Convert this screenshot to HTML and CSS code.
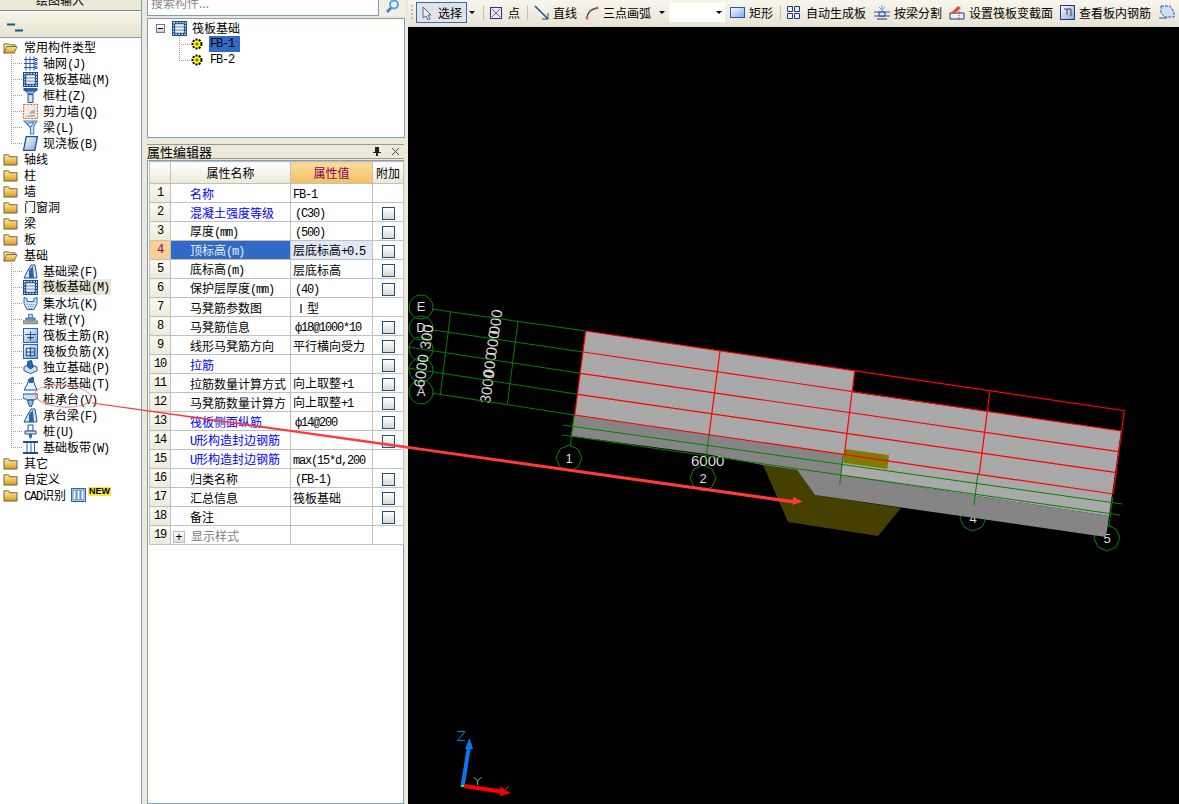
FILE: index.html
```html
<!DOCTYPE html>
<html lang="zh">
<head>
<meta charset="utf-8">
<title>筏板基础</title>
<link rel="stylesheet" href="styles.css">
</head>
<body>
<svg class="defs" width="0" height="0">
  <defs>
    <linearGradient id="gy" x1="0" y1="0" x2="0" y2="1"><stop offset="0" stop-color="#fdeca0"/><stop offset="1" stop-color="#dc9a20"/></linearGradient>
    <linearGradient id="gb" x1="0" y1="0" x2="1" y2="1"><stop offset="0" stop-color="#ffffff"/><stop offset="1" stop-color="#7fa8e0"/></linearGradient>
    <symbol id="fo" viewBox="0 0 16 14"><path d="M1 3h5l1 1h6v2H5L2 13H1z" fill="#f4dc90" stroke="#7a6a40"/><path d="M4 6h11l-3 7H1z" fill="url(#gy)" stroke="#7a6a40"/></symbol>
    <symbol id="fc" viewBox="0 0 16 14"><path d="M1 2h5l1 2h8v9H1z" fill="url(#gy)" stroke="#6a5a30"/></symbol>
    <symbol id="axis" viewBox="0 0 15 14"><path d="M1 3h11M1 7h11M1 11h11M3 0v14M7 0v14M11 0v14" stroke="#2a55b0" fill="none"/><path d="M12 2h2v2h-2zM12 6h2v2h-2zM12 10h2v2h-2z" fill="#fff" stroke="#2a55b0"/></symbol>
    <symbol id="raft" viewBox="0 0 14 14"><rect width="14" height="14" fill="#1c4f8c"/><rect x="3" y="3" width="8" height="8" fill="#eef4fb"/><path d="M3 5.500h8M3 8.500h8" stroke="#7fa0c8" fill="none"/><rect x="1.500" y="1.500" width="11" height="11" fill="none" stroke="#cfe0f5" stroke-dasharray="1.500 1.200"/></symbol>
    <symbol id="col" viewBox="0 0 14 15"><path d="M0 0h14v3H0z" fill="#2a5fb0"/><path d="M2 3h10L9 6H5z" fill="#8fb8e8" stroke="#2a5fb0"/><path d="M4.500 6.500h5V14.500h-5z" fill="#cfe0f5" stroke="#1c4f8c"/></symbol>
    <symbol id="wall" viewBox="0 0 14 14"><rect x=".5" y=".5" width="13" height="13" fill="#f4eadf" stroke="#d0703a" stroke-dasharray="2 1"/><path d="M3 11l8-1v2H3zM7 7l4-2v4H6z" fill="#aaa"/></symbol>
    <symbol id="beam" viewBox="0 0 14 14"><path d="M1 1h12l-3 5v7H7V7z" fill="#cfe6f8" stroke="#4a80b8"/><path d="M4 3l6-1-3 5z" fill="#f4f8fc" stroke="#4a80b8"/></symbol>
    <symbol id="slab" viewBox="0 0 14 14"><path d="M3 .5h10.500L11 13.500H.5z" fill="url(#gb)" stroke="#1c4f9c" stroke-width="1.200"/></symbol>
    <symbol id="fbeam" viewBox="0 0 15 15"><path d="M1 14l3-6 4-7h4l2 13z" fill="#dbe8f5" stroke="#1c4f8c"/><path d="M6 14V6l4-4 1 12z" fill="#2a66b0"/></symbol>
    <symbol id="pit" viewBox="0 0 15 14"><path d="M1 1l3 1v3h7V2l3-1v6l-3 6H4L1 7z" fill="#cfe0f5" stroke="#2a66b0"/><path d="M4 8h7M5 10h5M6 12h3" stroke="#6a90c8" stroke-dasharray="1 1"/></symbol>
    <symbol id="pier" viewBox="0 0 16 13"><path d="M6 1h4v4H6z" fill="#cfe0f5" stroke="#2a66b0"/><path d="M3 5h10v2H3z" fill="#9ab8dc" stroke="#2a66b0"/><path d="M0 8h16v3H0z" fill="#aaa" stroke="#777"/></symbol>
    <symbol id="main" viewBox="0 0 14 14"><rect x=".5" y=".5" width="13" height="13" fill="url(#gb)" stroke="#2a66b0"/><path d="M2 6h10M7 3v9M4 9h6" stroke="#1c4f8c" fill="none"/></symbol>
    <symbol id="neg" viewBox="0 0 14 14"><rect x=".5" y=".5" width="13" height="13" fill="url(#gb)" stroke="#2a66b0"/><path d="M3 4h8v7H3zM3 7.500h8M7 3v9" stroke="#1c4f8c" fill="none"/></symbol>
    <symbol id="indep" viewBox="0 0 16 15"><path d="M1 7l6-3 8 3v4l-7 3-7-3z" fill="#cfe0f5" stroke="#1c4f8c"/><path d="M5 7V1l4-1 2 7-3 2z" fill="#2a66b0" stroke="#1c4f8c"/></symbol>
    <symbol id="strip" viewBox="0 0 15 15"><path d="M1 14l3-5 2-6 4-2 1 6 3 7z" fill="#e8f0fa" stroke="#1c4f8c"/><path d="M6 3l5-2-1 6H6z" fill="#2a66b0"/></symbol>
    <symbol id="cap" viewBox="0 0 15 15"><path d="M0 2h15v4l-4 2H4L0 6z" fill="#cfe0f5" stroke="#1c4f8c"/><path d="M5 8h5v3l-2 4h-1l-2-4z" fill="#8fb8e8" stroke="#1c4f8c"/></symbol>
    <symbol id="pile" viewBox="0 0 13 15"><path d="M4 1h5v6H4z" fill="#fff" stroke="#1c4f8c"/><path d="M1 7h11v3H1z" fill="#cfe0f5" stroke="#1c4f8c"/><path d="M5 10h3v3l-1.500 2L5 13z" fill="#2a66b0"/></symbol>
    <symbol id="band" viewBox="0 0 15 13"><path d="M0 1h15M0 12h15" stroke="#1c4f8c" stroke-width="2"/><path d="M4 2v9M8 2v9M11.500 2v9" stroke="#2a66b0" fill="none"/></symbol>
    <symbol id="gear" viewBox="0 0 12 12"><circle cx="6" cy="6" r="4.500" fill="#ffff00" stroke="#000" stroke-width="2" stroke-dasharray="2 1.200"/><circle cx="6" cy="6" r="1.500" fill="#806000"/></symbol>
  </defs>
</svg>

<aside class="left">
  <div class="tab">绘图输入</div>
  <div class="subbar">
    <svg class="collapse" width="16" height="9" viewBox="0 0 16 9"><path d="M0 1.500h8" stroke="#067" stroke-width="2"/><path d="M8 7.500h8" stroke="#067" stroke-width="2"/></svg>
  </div>
  <div class="tree">
    <div class="row"><svg class="fold"><use href="#fo"/></svg><span>常用构件类型</span></div>
    <div class="row child"><i class="conn"></i><svg class="ic"><use href="#axis"/></svg><span>轴网<b>(J)</b></span></div>
    <div class="row child"><i class="conn"></i><svg class="ic"><use href="#raft"/></svg><span>筏板基础<b>(M)</b></span></div>
    <div class="row child"><i class="conn"></i><svg class="ic"><use href="#col"/></svg><span>框柱<b>(Z)</b></span></div>
    <div class="row child"><i class="conn"></i><svg class="ic"><use href="#wall"/></svg><span>剪力墙<b>(Q)</b></span></div>
    <div class="row child"><i class="conn"></i><svg class="ic"><use href="#beam"/></svg><span>梁<b>(L)</b></span></div>
    <div class="row child"><i class="conn end"></i><svg class="ic"><use href="#slab"/></svg><span>现浇板<b>(B)</b></span></div>
    <div class="row"><svg class="fold"><use href="#fc"/></svg><span>轴线</span></div>
    <div class="row"><svg class="fold"><use href="#fc"/></svg><span>柱</span></div>
    <div class="row"><svg class="fold"><use href="#fc"/></svg><span>墙</span></div>
    <div class="row"><svg class="fold"><use href="#fc"/></svg><span>门窗洞</span></div>
    <div class="row"><svg class="fold"><use href="#fc"/></svg><span>梁</span></div>
    <div class="row"><svg class="fold"><use href="#fc"/></svg><span>板</span></div>
    <div class="row"><svg class="fold"><use href="#fo"/></svg><span>基础</span></div>
    <div class="row child"><i class="conn"></i><svg class="ic"><use href="#fbeam"/></svg><span>基础梁<b>(F)</b></span></div>
    <div class="row child"><i class="conn"></i><svg class="ic"><use href="#raft"/></svg><span class="cur">筏板基础<b>(M)</b></span></div>
    <div class="row child"><i class="conn"></i><svg class="ic"><use href="#pit"/></svg><span>集水坑<b>(K)</b></span></div>
    <div class="row child"><i class="conn"></i><svg class="ic"><use href="#pier"/></svg><span>柱墩<b>(Y)</b></span></div>
    <div class="row child"><i class="conn"></i><svg class="ic"><use href="#main"/></svg><span>筏板主筋<b>(R)</b></span></div>
    <div class="row child"><i class="conn"></i><svg class="ic"><use href="#neg"/></svg><span>筏板负筋<b>(X)</b></span></div>
    <div class="row child"><i class="conn"></i><svg class="ic"><use href="#indep"/></svg><span>独立基础<b>(P)</b></span></div>
    <div class="row child"><i class="conn"></i><svg class="ic"><use href="#strip"/></svg><span>条形基础<b>(T)</b></span></div>
    <div class="row child"><i class="conn"></i><svg class="ic"><use href="#cap"/></svg><span>桩承台<b>(V)</b></span></div>
    <div class="row child"><i class="conn"></i><svg class="ic"><use href="#fbeam"/></svg><span>承台梁<b>(F)</b></span></div>
    <div class="row child"><i class="conn"></i><svg class="ic"><use href="#pile"/></svg><span>桩<b>(U)</b></span></div>
    <div class="row child"><i class="conn end"></i><svg class="ic"><use href="#band"/></svg><span>基础板带<b>(W)</b></span></div>
    <div class="row"><svg class="fold"><use href="#fc"/></svg><span>其它</span></div>
    <div class="row"><svg class="fold"><use href="#fc"/></svg><span>自定义</span></div>
    <div class="row"><svg class="fold"><use href="#fc"/></svg><span><b>CAD</b>识别</span>
      <svg class="cad" width="15" height="14" viewBox="0 0 15 14"><rect x=".5" y=".5" width="14" height="13" fill="#dbe8f5" stroke="#2a66b0"/><path d="M2 2h3v10H2zM6 2h3v10H6zM10 2h3v10h-3z" fill="#fff" stroke="#2a66b0" stroke-width=".8"/></svg>
      <em class="new">NEW</em>
    </div>
  </div>
</aside>

<section class="mid">
  <div class="search">
    <div class="search-box">搜索构件...</div>
    <div class="search-btn">
      <svg width="15" height="14" viewBox="0 0 15 14"><circle cx="9" cy="4.500" r="4" fill="#e4f2fc" stroke="#5aa0dc" stroke-width="2"/><path d="M6 8l-4 4" stroke="#3a80c8" stroke-width="2.500"/></svg>
    </div>
  </div>
  <div class="mtree">
    <div class="mrow"><i class="minus"></i><svg class="ic mic"><use href="#raft"/></svg><span>筏板基础</span></div>
    <div class="mrow sub"><i class="conn"></i><svg class="gear"><use href="#gear"/></svg><span class="lab sel">FB-1</span></div>
    <div class="mrow sub"><i class="conn end"></i><svg class="gear"><use href="#gear"/></svg><span class="lab">FB-2</span></div>
  </div>
  <div class="phead">
    <span>属性编辑器</span>
    <svg width="8" height="9" viewBox="0 0 8 9"><path d="M2 0h4v5h2v1H5v3H3V6H0V5h2z" fill="#222"/></svg>
    <svg width="9" height="9" viewBox="0 0 9 9"><path d="M1 1l7 7M8 1l-7 7" stroke="#444" fill="none"/></svg>
  </div>
  <div class="pwrap">
    <table class="ptable">
      <colgroup><col class="c1"><col class="c2"><col class="c3"><col class="c4"></colgroup>
      <thead><tr><th></th><th>属性名称</th><th class="hval">属性值</th><th>附加</th></tr></thead>
      <tbody>
        <tr><td class="n">1</td><td class="k blue">名称</td><td class="v"><b>FB-1</b></td><td></td></tr>
        <tr><td class="n">2</td><td class="k blue">混凝土强度等级</td><td class="v p"><b>(C30)</b></td><td class="chk"><i></i></td></tr>
        <tr><td class="n">3</td><td class="k">厚度<b>(mm)</b></td><td class="v p"><b>(500)</b></td><td class="chk"><i></i></td></tr>
        <tr class="on"><td class="n">4</td><td class="k">顶标高<b>(m)</b></td><td class="v">层底标高<b>+0.5</b></td><td class="chk"><i></i></td></tr>
        <tr><td class="n">5</td><td class="k">底标高<b>(m)</b></td><td class="v">层底标高</td><td class="chk"><i></i></td></tr>
        <tr><td class="n">6</td><td class="k">保护层厚度<b>(mm)</b></td><td class="v p"><b>(40)</b></td><td class="chk"><i></i></td></tr>
        <tr><td class="n">7</td><td class="k">马凳筋参数图</td><td class="v p">Ⅰ型</td><td></td></tr>
        <tr><td class="n">8</td><td class="k">马凳筋信息</td><td class="v p"><b>ф18@1000*10</b></td><td class="chk"><i></i></td></tr>
        <tr><td class="n">9</td><td class="k">线形马凳筋方向</td><td class="v">平行横向受力</td><td class="chk"><i></i></td></tr>
        <tr><td class="n">10</td><td class="k blue">拉筋</td><td class="v"></td><td class="chk"><i></i></td></tr>
        <tr><td class="n">11</td><td class="k">拉筋数量计算方式</td><td class="v">向上取整<b>+1</b></td><td class="chk"><i></i></td></tr>
        <tr><td class="n">12</td><td class="k">马凳筋数量计算方</td><td class="v">向上取整<b>+1</b></td><td class="chk"><i></i></td></tr>
        <tr><td class="n">13</td><td class="k blue">筏板侧面纵筋</td><td class="v p"><b>ф14@200</b></td><td class="chk"><i></i></td></tr>
        <tr><td class="n">14</td><td class="k blue"><b>U</b>形构造封边钢筋</td><td class="v"></td><td class="chk"><i></i></td></tr>
        <tr><td class="n">15</td><td class="k blue"><b>U</b>形构造封边钢筋</td><td class="v"><b>max(15*d,200</b></td><td></td></tr>
        <tr><td class="n">16</td><td class="k">归类名称</td><td class="v p"><b>(FB-1)</b></td><td class="chk"><i></i></td></tr>
        <tr><td class="n">17</td><td class="k">汇总信息</td><td class="v">筏板基础</td><td class="chk"><i></i></td></tr>
        <tr><td class="n">18</td><td class="k">备注</td><td class="v"></td><td class="chk"><i></i></td></tr>
        <tr><td class="n">19</td><td class="k grey"><i class="plus">+</i>显示样式</td><td class="v"></td><td></td></tr>
      </tbody>
    </table>
  </div>
</section>

<main class="main">
  <div class="toolbar">
    <i class="grip"></i>
    <div class="tool active">
      <svg width="12" height="14" viewBox="0 0 12 14"><path d="M2 1v11l3-2 2 4 2-1-2-4h3z" fill="#e8ecf4" stroke="#667"/></svg><span>选择</span>
    </div>
    <i class="caret"></i><i class="sep"></i>
    <div class="tool">
      <svg width="12" height="12" viewBox="0 0 12 12"><rect x=".5" y=".5" width="11" height="11" fill="#e4ecf8" stroke="#22358c"/><path d="M2 2l8 8M10 2l-8 8" stroke="#d04040"/></svg><span class="gap2">点</span>
    </div>
    <i class="sep"></i>
    <div class="tool">
      <svg width="15" height="15" viewBox="0 0 15 15"><path d="M1 1l13 13" stroke="#1c4f8c" stroke-width="1.500"/><path d="M14 8v6H8" stroke="#1c4f8c" fill="none"/></svg><span>直线</span>
    </div>
    <div class="tool">
      <svg width="14" height="14" viewBox="0 0 14 14"><path d="M2 12C2 7 6 3 12 2" stroke="#1c4f8c" stroke-width="1.500" fill="none"/><circle cx="2" cy="12" r="1.500" fill="#e06040"/><circle cx="5" cy="5" r="1.200" fill="#e06040"/><circle cx="12" cy="2" r="1.500" fill="#e06040"/></svg><span>三点画弧</span>
    </div>
    <i class="caret"></i>
    <div class="combo"><i class="caret"></i></div>
    <div class="tool">
      <svg width="15" height="11" viewBox="0 0 15 11"><rect x=".5" y=".5" width="14" height="10" fill="url(#gb)" stroke="#2a55b0"/></svg><span>矩形</span>
    </div>
    <i class="sep"></i>
    <div class="tool">
      <svg class="pad" width="13" height="13" viewBox="0 0 13 13"><path d="M.5.5h5v5h-5zM7.500.5h5v5h-5zM.5 7.500h5v5h-5zM7.500 7.500h5v5h-5z" fill="#e8f0fa" stroke="#22358c"/></svg><span>自动生成板</span>
    </div>
    <div class="tool tight">
      <svg width="16" height="15" viewBox="0 0 16 15"><path d="M0 7h16M0 11h16" stroke="#2a55b0"/><path d="M5 7h6v4H5z" fill="#cfe0f5" stroke="#22358c"/><path d="M8 0v6M5 2l3 3 3-3" stroke="#60a0e8" fill="none"/><path d="M3 14h10" stroke="#22358c"/></svg><span>按梁分割</span>
    </div>
    <div class="tool tight">
      <svg width="16" height="15" viewBox="0 0 16 15"><path d="M1 8h14v6H1z" fill="#e8f0fa" stroke="#22358c"/><path d="M2 8l7-7 3 2-7 6z" fill="#e05030"/><path d="M10 6v9" stroke="#d02020" stroke-dasharray="1 1"/></svg><span>设置筏板变截面</span>
    </div>
    <div class="tool">
      <svg width="15" height="15" viewBox="0 0 15 15"><rect x=".5" y=".5" width="14" height="14" fill="url(#gb)" stroke="#22358c"/><path d="M4 4h7v7M7 4v6" stroke="#444" fill="none"/></svg><span>查看板内钢筋</span>
    </div>
    <div class="tool">
      <svg width="16" height="15" viewBox="0 0 16 15"><path d="M2 1h9l4 6v5H6L2 8z" fill="#cfe0f5" stroke="#2a55b0" stroke-dasharray="3 1"/><path d="M0 13h8" stroke="#2a55b0"/></svg>
    </div>
  </div>
  <div class="canvas">
    <svg class="cad-view" width="771" height="777" viewBox="408 27 771 777">
      <g class="g-thin">
        <circle cx="421" cy="307" r="12"/><circle cx="421" cy="328" r="12"/><circle cx="421" cy="349" r="12"/><circle cx="421" cy="370" r="12"/><circle cx="421" cy="392" r="12"/>
        <polygon points="569,445 578,449 582,458 578,467 569,471 560,467 556,458 560,449"/>
        <polygon points="703,465 712,469 716,478 712,487 703,491 694,487 690,478 694,469"/>
        <polygon points="973,505 982,509 986,518 982,527 973,531 964,527 960,518 964,509"/>
        <polygon points="1107,525 1116,529 1120,538 1116,547 1107,551 1098,547 1094,538 1098,529"/>
      </g>
      <g class="dim">
        <text x="421" y="311" class="tc">E</text><text x="421" y="332" class="tc">D</text><text x="421" y="396" class="tc">A</text>
        <text x="569" y="463" class="tc">1</text><text x="703" y="483" class="tc">2</text><text x="973" y="523" class="tc">4</text><text x="1107" y="543" class="tc">5</text>
        <text transform="translate(424 388) rotate(-82)">6000</text>
        <text transform="translate(430 350) rotate(-82)">300</text>
        <text transform="translate(490 404) rotate(-82)">3000</text>
        <text transform="translate(493 378) rotate(-82)">000</text>
        <text transform="translate(496 356) rotate(-82)">000</text>
        <text transform="translate(499 335) rotate(-82)">000</text>
        <text x="691" y="466">6000</text>
      </g>
      <polygon class="olive" points="763,465 797,470 815,495 901,508 878,536 788,522"/>
      <polygon class="side" points="574.700,415 843.500,454.500 840,475 1109,516 1106,537 815,495 797,470 763,465 706,454 571,436"/>
      <polygon class="top" points="585.700,331 854.700,370.700 852.700,392.300 1121,430.700 1109,516 840,475 843.500,454.500 574.700,415"/>
      <polygon class="olive2" points="845,449 889,455.300 887.300,469 843.300,462.700"/>
      <g class="red">
        <path d="M585.700 331L1124.300 410.700L1113.300 494"/>
        <path d="M583.300 352L1121 431"/><path d="M580.700 373.300L1118.300 451.700"/><path d="M578 394.300L1116.700 472.700"/><path d="M574.700 415L1113.300 494"/>
        <path d="M585.700 331L574.700 415"/><path d="M720 351L709 435"/><path d="M854.700 370.700L844.300 455"/><path d="M990 390.700L979.300 473.300"/>
      </g>
      <g class="green">
        <path d="M433 309.300L585.700 331"/><path d="M433 330L583.300 352"/><path d="M408 347L580.700 373.300"/><path d="M408 368L578 394.300"/><path d="M433 393.300L574.700 415"/>
        <path d="M450.700 311.700L440.300 395"/><path d="M518 321.700L507.300 404"/>
        <path d="M574 415L570.300 446"/><path d="M709 435L705 465"/><path d="M843.300 455L839.700 484.300"/><path d="M978 473L974 505"/><path d="M1112.700 497L1109 527"/>
        <path d="M563 425L1122 504"/><path d="M562 435L1120 515"/>
      </g>
      <g class="axis-view">
        <path class="ax-b" d="M462.500 787L469 746"/><path class="ax-bh" d="M469.500 738L473 749H465z"/>
        <path class="ax-r" d="M464 786L504 792"/><path class="ax-rh" d="M511 793L500 788V796z"/>
        <path class="ax-thin-r" d="M500 786L505 791M509 786L504 791"/>
        <path class="ax-g" d="M477.500 785V781M477.500 781L473.500 777M477.500 781L481.500 777"/>
        <path class="ax-z" d="M457.500 731.500H465L457.500 740.500H465"/>
        <rect class="ax-o" x="461" y="785" width="3" height="2"/>
      </g>
    </svg>
  </div>
</main>

<svg class="annot" width="1179" height="804" viewBox="0 0 1179 804">
  <ellipse cx="63" cy="396" rx="28" ry="11" transform="rotate(4 63 396)"/>
  <polygon points="92,402.600 408,446 793,500 793.300,496.700 802.700,501.700 791.700,505 793,503.400 408,448.800 92,403.400"/>
</svg>
</body>
</html>
```

FILE: styles.css
```css
* { box-sizing: border-box; }
html, body { margin: 0; padding: 0; }
body {
  width: 1179px; height: 804px; overflow: hidden;
  display: flex; position: relative;
  background: #ece9d8;
  font: 12px/16px "Noto Sans CJK SC", "Liberation Sans", sans-serif;
  color: #000;
}
b { font: 12px "Liberation Mono", monospace; letter-spacing: -1.2px; }
i, em { font-style: normal; }
.defs { position: absolute; }

/* left tree */
.left { width: 142px; height: 804px; flex: none; display: flex; flex-direction: column; border-right: 1px solid #7f9db9; }
.tab { height: 11px; line-height: 0; text-align: center; overflow: hidden; background: #ece9d8; border-bottom: 1px solid #888; font-size: 12px; padding: 0 21px 0 0; }
.subbar { height: 27px; display: flex; align-items: center; padding: 5px 0 0 7px; background: linear-gradient(#f6f4ea, #e6e2d0); border-top: 1px solid #fff; border-bottom: 1px solid #7f9db9; }
.tree { flex: 1; background: #fff; padding-top: 1px; }
.row { height: 16px; display: flex; align-items: center; white-space: nowrap; padding-left: 3px; }
.row.child { padding-left: 11px; }
.fold { width: 15px; height: 13px; margin-right: 6px; flex: none; }
.ic { width: 15px; height: 15px; margin-right: 5px; flex: none; }
.conn { width: 12px; height: 16px; flex: none; background:
  repeating-linear-gradient(#999 0 1px, transparent 1px 2px) left top / 1px 100% no-repeat,
  repeating-linear-gradient(90deg, #999 0 1px, transparent 1px 2px) left 8px / 100% 1px no-repeat; }
.conn.end { background:
  repeating-linear-gradient(#999 0 1px, transparent 1px 2px) left top / 1px 9px no-repeat,
  repeating-linear-gradient(90deg, #999 0 1px, transparent 1px 2px) left 8px / 100% 1px no-repeat; }
.cur { background: #ebe8d8; padding: 0 2px; margin: 0 -2px; line-height: 13px; }
.cad { margin-left: 5px; }
.new { font: bold 9px/9px "Liberation Sans", sans-serif; background: #ffe830; padding: 0 1px; margin: -7px 0 0 2px; }

/* middle */
.mid { width: 258px; height: 804px; flex: none; margin-left: 5px; display: flex; flex-direction: column; }
.search { height: 16px; display: flex; }
.search-box { width: 232px; background: #fff; border: solid #7f9db9; border-width: 0 1px 1px 1px; color: #888; line-height: 6px; overflow: hidden; padding-left: 3px; font-size: 12px; }
.search-btn { flex: 1; display: flex; align-items: flex-start; justify-content: center; background: #f2f0e4; }
.mtree { margin-top: 2px; height: 120px; border: 1px solid #7f9db9; background: #fff; padding: 1px 0 0 8px; }
.mrow { height: 16px; display: flex; align-items: center; }
.minus { width: 9px; height: 9px; border: 1px solid #6a7a90; background: linear-gradient(#fff, #ccc); position: relative; margin-right: 7px; }
.minus::after { content: ""; position: absolute; left: 1px; top: 3px; width: 5px; height: 1px; background: #000; }
.mic { margin-right: 5px; }
.mrow.sub { padding-left: 23px; }
.gear { width: 12px; height: 12px; margin: 0 6px 0 0; flex: none; }
.lab { font: 12px/16px "Liberation Mono", monospace; letter-spacing: -1.2px; padding: 0 0 0 1px; width: 31px; height: 16px; }
.sel { background: #316ac5; color: #000; }
.mrow.sub .gear { margin-left: 0; }
.phead { margin-top: 6px; height: 15px; display: flex; align-items: center; gap: 10px; background: #ece9d8; border: 1px solid #999; border-width: 1px 0 1px 0; margin-right: 1px; font-size: 13px; padding-right: 4px; }
.phead span { flex: 1; }
.pwrap { flex: 1; margin: 1px 1px 0 0; border: 1px solid #7f9db9; background: #fff; padding-left: 1px; }
.ptable { width: 254px; table-layout: fixed; border-collapse: collapse; }
.c1 { width: 21px; } .c2 { width: 120px; } .c3 { width: 82px; } .c4 { width: 31px; }
.ptable th { height: 22px; padding: 0; font-weight: normal; border: 1px solid #c0c0c0; background: linear-gradient(#fff, #ece9d8); }
.ptable th.hval { background: linear-gradient(#fbdc9e, #f3c060); color: #800060; }
.ptable td { height: 19px; padding: 0; border: 1px solid #c0c0c0; white-space: nowrap; overflow: hidden; line-height: 17px; }
.n { text-align: center; font: 12px "Liberation Mono", monospace; letter-spacing: -1.2px; background: linear-gradient(#fbfaf4, #ece9d8); }
.k { padding-left: 19px !important; }
.blue { color: #0000ff; }
.grey { color: #808080; padding-left: 2px !important; }
.v { padding-left: 2px !important; }
.p { padding-left: 4px !important; }
.chk { text-align: center; }
.chk i { display: inline-block; width: 13px; height: 13px; border: 1px solid #1c5180; background: linear-gradient(#fff, #d8d8d0); vertical-align: middle; margin-top: -1px; }
.plus { display: inline-block; width: 12px; height: 12px; border: 1px solid #bbb; background: linear-gradient(#fff, #ddd); color: #000; text-align: center; margin-right: 6px; vertical-align: middle; font: 12px/10px "Liberation Sans", sans-serif; }
.on .n { background: #f8d090; color: #800080; }
.on .k { background: #316ac5; color: #e8eefa; }
.on .v { background: #dfe8f5; }

/* main */
.main { flex: 1; min-width: 0; height: 804px; margin-left: 3px; display: flex; flex-direction: column; overflow: hidden; }
.toolbar { height: 27px; flex: none; display: flex; align-items: center; white-space: nowrap; background: linear-gradient(#f8f6ec, #e8e4d4); padding: 0 0 1px 3px; border-bottom: 1px solid #ddd; overflow: hidden; }
.grip { width: 2px; height: 16px; margin-right: 3px; background: repeating-linear-gradient(#bbb 0 2px, transparent 2px 4px); flex: none; }
.tool { display: flex; align-items: center; gap: 4px; height: 21px; margin-right: 8px; flex: none; }
.tool.tight { margin-right: 7px; }
.tool.active { width: 51px; padding-left: 4px; margin-right: 2px; border: 1px solid #316ac5; background: #dfe3e8; gap: 5px; }
.pad { margin-right: 2px; }
.gap2 { margin-left: 2px; }
.caret { width: 0; height: 0; border: 3px solid transparent; border-top: 3px solid #000; border-bottom: 0; flex: none; }
.sep { width: 1px; height: 15px; background: #c4c0b0; margin: 0 6px 0 -1px; flex: none; }
.caret + .sep { margin-left: 8px; }
.combo { width: 56px; height: 19px; background: #fff; margin: 0 5px 0 4px; display: flex; align-items: center; justify-content: flex-end; flex: none; padding-right: 3px; }
.canvas { flex: 1; background: #000; overflow: hidden; }
.cad-view { display: block; }
.g-thin { fill: none; stroke: #0a800a; stroke-width: 1; }
.dim text { fill: #dcdcdc; font: 15px "Liberation Sans", sans-serif; }
.dim .tc { text-anchor: middle; font-size: 13px; }
.olive { fill: #454000; }
.olive2 { fill: #807a00; }
.side { fill: #858585; }
.top { fill: #a9a9a9; }
.red path { fill: none; stroke: #ff0000; stroke-width: 1.200; }
.green path { fill: none; stroke: #008000; stroke-width: 1; }
.ax-b { stroke: #0a78f0; stroke-width: 4; fill: none; }
.ax-bh { fill: #0a78f0; }
.ax-r { stroke: #ff0000; stroke-width: 4; fill: none; }
.ax-rh { fill: #ff0000; }
.ax-thin-r { stroke: #ff0000; fill: none; }
.ax-g { stroke: #40e040; fill: none; }
.ax-z { stroke: #0a78f0; fill: none; }
.ax-o { fill: #40e040; }
.annot { position: absolute; left: 0; top: 0; pointer-events: none; }
.annot ellipse { fill: none; stroke: #f08080; stroke-width: 1; }
.annot polygon { fill: #ff3a3a; }
```
